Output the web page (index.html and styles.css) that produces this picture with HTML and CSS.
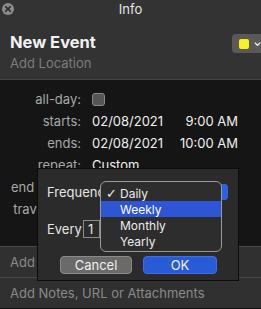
FILE: index.html
```html
<!DOCTYPE html>
<html lang="en">
<head>
    <meta charset="UTF-8">
    <title>Info</title>
    <link rel="stylesheet" href="styles.css">
</head>
<body>
    <div class="window">
        <div class="top">
            <div class="titlebar">
                <span class="close">
                    <svg width="12" height="12" viewBox="0 0 12 12">
                        <circle cx="6" cy="6" r="6" fill="#8c8c8c"/>
                        <path d="M3.6 3.6 L8.4 8.4 M8.4 3.6 L3.6 8.4" stroke="#2e2e2e" stroke-width="1.6" stroke-linecap="round"/>
                    </svg>
                </span>
                <span class="title">Info</span>
            </div>
            <div class="head">
                <div class="head-text">
                    <div class="event-name">New Event</div>
                    <div class="location">Add Location</div>
                </div>
                <div class="color-btn">
                    <span class="swatch"></span>
                    <svg width="8" height="6" viewBox="0 0 8 6"><path d="M1 1.5 L4 4.5 L7 1.5" fill="none" stroke="#e8e8e8" stroke-width="1.5"/></svg>
                </div>
            </div>
        </div>

        <div class="details">
            <div class="row"><span class="label">all-day:</span><span class="checkbox"></span></div>
            <div class="row"><span class="label">starts:</span><span class="date">02/08/2021</span><span class="time">9:00 AM</span></div>
            <div class="row"><span class="label">ends:</span><span class="date">02/08/2021</span><span class="time">10:00 AM</span></div>
            <div class="row"><span class="label">repeat:</span><span class="date">Custom...</span></div>
            <div class="row"><span class="label">end repeat:</span><span class="date">Never</span></div>
            <div class="row"><span class="label">travel time:</span><span class="date">None</span></div>
        </div>

        <div class="bottom-row">Add Invitees</div>
        <div class="bottom-row">Add Notes, URL or Attachments</div>

        <div class="sheet">
            <div class="sheet-row">
                <span class="sheet-label">Frequency:</span>
                <div class="select"><span class="stepper"></span></div>
            </div>
            <div class="sheet-row every">
                <span class="sheet-label">Every</span>
                <span class="num-input">1</span>
            </div>
            <div class="buttons">
                <button class="btn btn-cancel">Cancel</button>
                <button class="btn btn-ok">OK</button>
            </div>

            <div class="menu">
                <div class="menu-item"><span class="check">✓</span>Daily</div>
                <div class="menu-item active"><span class="check"></span>Weekly</div>
                <div class="menu-item"><span class="check"></span>Monthly</div>
                <div class="menu-item"><span class="check"></span>Yearly</div>
            </div>
        </div>
    </div>
</body>
</html>
```

FILE: styles.css
```css
body { margin: 0; background: #151515; font-family: Inter, "Liberation Sans", sans-serif; font-size: 13px; }
.window { position: relative; width: 261px; height: 309px; overflow: hidden; background: #151515; }

.top { background: #333333; height: 79px; border-bottom: 1px solid #454545; }
.titlebar { height: 17px; display: flex; align-items: center; justify-content: center; position: relative; }
.close { position: absolute; left: 2px; top: 3px; width: 12px; height: 12px; }
.close svg { display: block; }
.title { color: #e6e6e6; font-size: 13px; }

.head { display: flex; justify-content: space-between; align-items: flex-start; padding: 15px 0 0 10px; }
.event-name { color: #f2f2f2; font-size: 16.5px; font-weight: 700; line-height: 20px; }
.location { color: #7d7d7d; font-size: 13px; line-height: 16px; margin-top: 3px; }
.color-btn { display: flex; align-items: center; gap: 5px; background: #595959; border-radius: 4px 0 0 4px; width: 29px; height: 19px; margin-top: 2px; padding-left: 7px; box-sizing: border-box; }
.swatch { flex: none; width: 10px; height: 10px; background: #f7f320; border-radius: 2px; }

.details { height: 166px; padding-top: 8px; box-sizing: border-box; }
.row { display: flex; align-items: center; height: 22px; color: #f0f0f0; }
.label { flex: none; width: 92px; text-align: right; color: #a9a9a9; padding-right: 11px; box-sizing: border-box; white-space: nowrap; }
.checkbox { width: 11px; height: 11px; border: 1px solid #8a8a8a; background: #555555; border-radius: 3px; }
.date { width: 88px; }
.time { width: 58px; text-align: right; }

.bottom-row { height: 30px; line-height: 30px; padding-left: 10px; background: #303030; color: #8a8a8a; border-top: 1px solid #4a4a4a; }

.sheet { position: absolute; left: 37px; top: 168px; width: 202px; height: 113px; box-sizing: border-box; background: #2b2b2b; border: 1px solid #0c0c0c; padding: 15px 0 0 9px; }
.sheet-row { display: flex; align-items: center; height: 16px; color: #e6e6e6; }
.sheet-label { flex: none; width: 54px; }
.every { margin-top: 20px; height: 18px; }
.every .sheet-label { width: 36px; }
.select { width: 127px; height: 16px; background: #5e5e5e; border-radius: 4px; display: flex; justify-content: flex-end; }
.stepper { width: 7px; height: 16px; background: #2d63e0; border-radius: 0 4px 4px 0; }
.num-input { width: 17px; height: 18px; box-sizing: border-box; border: 1px solid #8a8a8a; background: #2b2b2b; padding-left: 4px; line-height: 16px; }

.buttons { display: flex; gap: 11px; margin-top: 18px; padding-left: 13px; }
.btn { height: 18px; border-radius: 4px; font-family: inherit; font-size: 13px; color: #f0f0f0; padding: 0; }
.btn-cancel { width: 72px; background: #6a6a6a; border: 1px solid #8a8a8a; }
.btn-ok { width: 74px; background: #2a5bd7; border: 1px solid #3b6ff0; }

.menu { position: absolute; left: 62px; top: 12px; width: 122px; height: 71px; box-sizing: border-box; background: #2d2d2d; border: 1px solid #9a9a9a; border-radius: 6px; padding-top: 3px; }
.menu-item { display: flex; align-items: center; height: 16px; color: #ececec; font-size: 12px; }
.menu-item.active { background: #2d55d6; color: #ffffff; }
.check { flex: none; width: 19px; padding-left: 5px; box-sizing: border-box; font-size: 13px; font-family: "DejaVu Sans", sans-serif; }
```
